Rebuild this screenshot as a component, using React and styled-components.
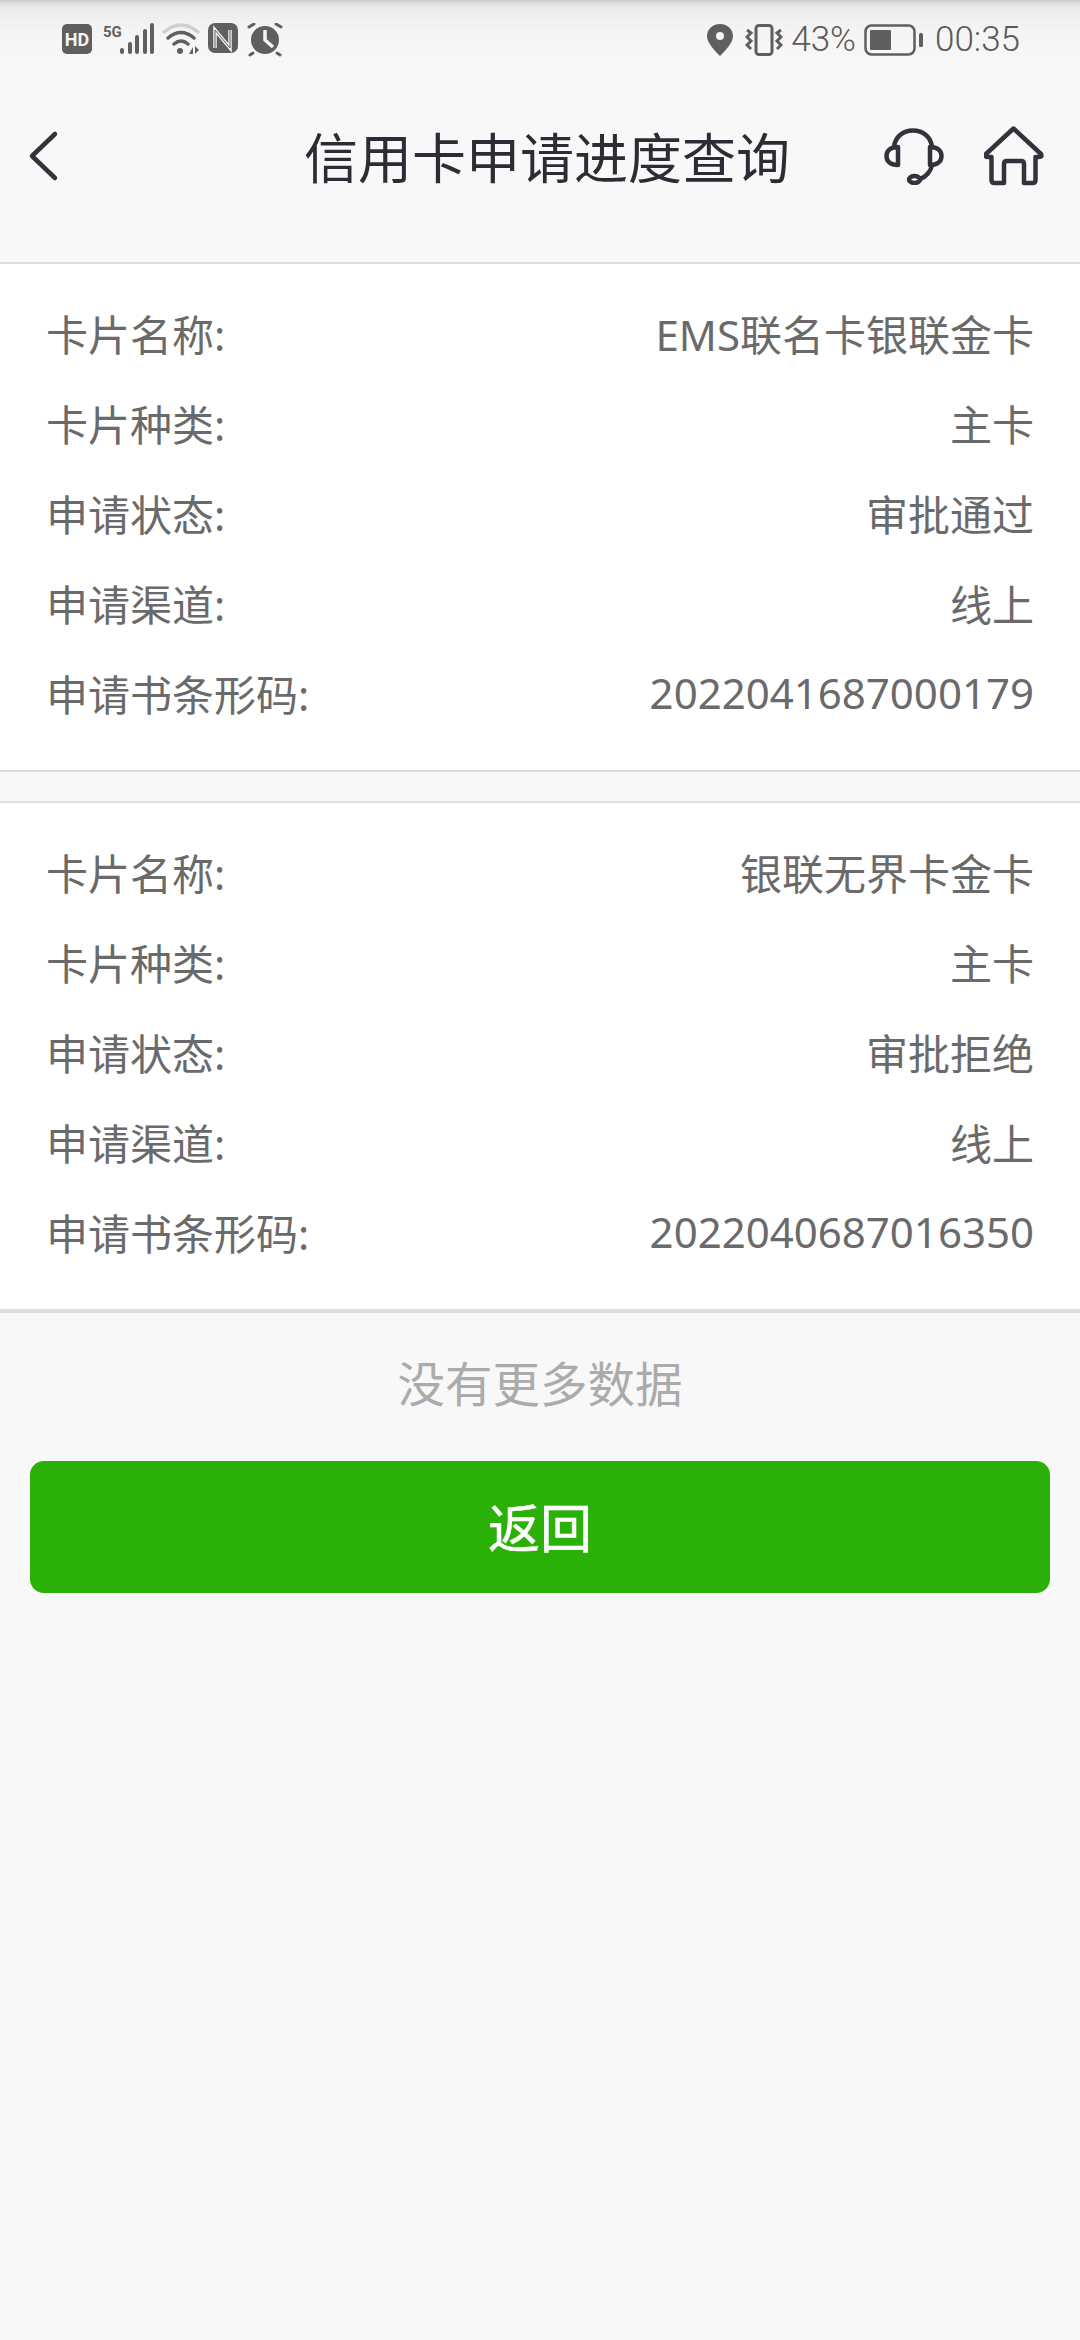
import React from 'react';
import styled, {createGlobalStyle} from 'styled-components';

const GlobalStyle = createGlobalStyle`
  html, body {
    margin: 0;
    padding: 0;
    background: #f8f8f8;
    font-family: "Noto Sans", "Noto Sans CJK SC", sans-serif;
  }
  * { box-sizing: border-box; }
`;

const Page = styled.div`
  width: 1080px;
  height: 2340px;
  overflow: hidden;
  background: #f8f8f8;
`;

const StatusBar = styled.div`
  height: 80px;
  padding: 0 60px 0 62px;
  display: flex;
  align-items: center;
  justify-content: space-between;
  color: #5a5a5a;
  background: linear-gradient(#c9c9c9 0, #dedede 3px, #ececec 8px, #f4f4f4 30px, #f8f8f8 62px);
`;

const StatusGroup = styled.div`
  display: flex;
  align-items: center;
  gap: ${props => props.$gap}px;
`;

const StatusText = styled.span`
  font-family: Roboto, sans-serif;
  font-size: 35px;
  font-weight: 300;
  line-height: 40px;
  margin-left: ${props => props.$left || 0}px;
`;

const NavBar = styled.div`
  height: 182px;
  padding: 0 36px 30px 28px;
  display: flex;
  align-items: center;
`;

const NavTitle = styled.h1`
  margin: 0 0 0 146px;
  flex: 1;
  text-align: center;
  font-family: "Noto Sans CJK SC", sans-serif;
  font-size: 54px;
  font-weight: 400;
  line-height: 70px;
  color: #2c2c34;
`;

const NavActions = styled.div`
  display: flex;
  align-items: center;
  gap: 40px;
`;

const Card = styled.section`
  background: #fff;
  border-top: 2px solid #dedede;
  border-bottom: ${props => props.$last ? 4 : 2}px solid #dedede;
  padding: 24px 46px 0 46px;
  height: ${props => props.$last ? 512 : 510}px;
  margin-bottom: ${props => props.$last ? 0 : 29}px;
`;

const Row = styled.div`
  height: 89.8px;
  display: flex;
  align-items: center;
  justify-content: space-between;
  font-size: 42px;
  font-weight: 400;
  color: #6a6a6a;
`;

const NoMore = styled.div`
  margin-top: 34px;
  text-align: center;
  font-family: "Noto Sans CJK SC", sans-serif;
  font-size: 47.5px;
  font-weight: 400;
  line-height: 70px;
  color: #ababab;
`;

const BackButton = styled.button`
  display: block;
  width: 1020px;
  height: 132px;
  margin: 44px 30px 0;
  padding: 0 0 3px;
  border: 0;
  border-radius: 14px;
  background: #2bb008;
  color: #fff;
  font-family: "Noto Sans CJK SC", sans-serif;
  font-size: 52px;
  font-weight: 400;
  -webkit-text-stroke: 0.5px #fff;
`;

const BackIcon = () => (
  <svg width="36" height="60" viewBox="0 0 36 60" fill="none" stroke="#33333b" strokeWidth="4.5" strokeLinecap="round" strokeLinejoin="round">
    <path d="M27 8 L4 30 L27 52"/>
  </svg>
);

const HeadsetIcon = () => (
  <svg width="60" height="57" viewBox="0 0 60 57" fill="none" stroke="#33333b" strokeWidth="4.5" strokeLinecap="round" strokeLinejoin="round">
    <path d="M10 19 C11 9 19 2.5 29 2.5 C39 2.5 47 9 48 19"/>
    <path d="M14 19 C6 19 2.5 23 2.5 28 C2.5 33 6 37 14 37 Z"/>
    <path d="M46 19 C54 19 57.5 23 57.5 28 C57.5 33 54 37 46 37 Z"/>
    <path d="M48 37 C47 43 42 49 36 51"/>
    <ellipse cx="30.5" cy="51.5" rx="5.5" ry="3.5"/>
  </svg>
);

const HomeIcon = () => (
  <svg width="60" height="60" viewBox="0 0 60 60" fill="none" stroke="#33333b" strokeWidth="4.5" strokeLinecap="round" strokeLinejoin="round">
    <path d="M29.5 2.5 L57 28 Q58.5 31 55 31 L51.5 31 L51.5 54 Q51.5 57 48.5 57 L40 57 L40 38 Q40 35 37 35 L23 35 Q20 35 20 38 L20 57 L10.5 57 Q7.5 57 7.5 54 L7.5 31 L4 31 Q0.5 31 2 28 Z"/>
  </svg>
);

const SignalIcons = () => (
  <svg width="222" height="34" viewBox="0 0 222 34" fill="#5f5f5f">
    <rect x="0" y="1" width="30" height="30" rx="5"/>
    <text x="15" y="22.5" fontSize="18" fontWeight="700" fill="#f5f5f5" textAnchor="middle" fontFamily="Roboto">HD</text>
    <text x="41" y="14" fontSize="15" fontWeight="700" fontFamily="Roboto">5G</text>
    <rect x="58" y="25" width="4" height="6" rx="2"/>
    <rect x="66" y="19" width="4" height="12" rx="2"/>
    <rect x="73" y="12" width="4" height="19" rx="2"/>
    <rect x="81" y="6" width="4" height="25" rx="2"/>
    <rect x="88" y="0" width="4" height="31" rx="2"/>
    <path d="M102 9 Q119 -5 136 9" fill="none" stroke="#cfcfcf" strokeWidth="3.5" strokeLinecap="round"/>
    <path d="M106 15 Q119 4 132 15" fill="none" stroke="#5f5f5f" strokeWidth="3.5" strokeLinecap="round"/>
    <path d="M112 21 Q119 15 126 21" fill="none" stroke="#5f5f5f" strokeWidth="3.5" strokeLinecap="round"/>
    <circle cx="118" cy="28" r="3"/>
    <path d="M127 31 L131 31 L131 24 Z M133 23 L133 31 L137 27 Z"/>
    <rect x="146" y="0" width="30" height="30" rx="7"/>
    <path d="M153 25 L153 7 L168 25 L168 7" fill="none" stroke="#f5f5f5" strokeWidth="3.5"/>
    <path d="M153 25 L153 7 L168 25 L168 7" fill="none" stroke="#5f5f5f" strokeWidth="1"/>
    <circle cx="203" cy="17" r="14"/>
    <path d="M203 7 L203 17 L211 24" fill="none" stroke="#f5f5f5" strokeWidth="3.5"/>
    <path d="M187 4 L192 1 M219 4 L214 1 M191 30 L188 32 M215 30 L218 32" stroke="#5f5f5f" strokeWidth="3" strokeLinecap="round"/>
  </svg>
);

const LocationIcon = () => (
  <svg width="26" height="32" viewBox="0 0 26 32" fill="#5f5f5f">
    <path fillRule="evenodd" d="M13 0 C21 0 26 6 26 12 C26 19 18 27 13 32 C8 27 0 19 0 12 C0 6 5 0 13 0 Z M13 8 A4 4 0 1 0 13.01 16 A4 4 0 1 0 13 8 Z"/>
  </svg>
);

const VibrateIcon = () => (
  <svg width="38" height="32" viewBox="0 0 38 32" fill="none" stroke="#5f5f5f" strokeWidth="3">
    <rect x="11" y="1.5" width="16" height="29" rx="3"/>
    <path d="M2 6 L6 9 L2 13 L6 17 L2 21 L6 25 M36 6 L32 9 L36 13 L32 17 L36 21 L32 25"/>
  </svg>
);

const BatteryIcon = () => (
  <svg width="60" height="32" viewBox="0 0 60 32" fill="none">
    <rect x="1.5" y="1.5" width="49" height="29" rx="6" stroke="#5f5f5f" strokeWidth="2.5"/>
    <rect x="6" y="6" width="21" height="20" rx="1" fill="#5f5f5f"/>
    <rect x="55" y="9" width="4" height="14" rx="1.5" fill="#5f5f5f"/>
  </svg>
);

const cards = [
  {name: 'EMS联名卡银联金卡', state: '审批通过', code: '2022041687000179'},
  {name: '银联无界卡金卡', state: '审批拒绝', code: '2022040687016350'},
];

const App = () => {
  return (
    <Page>
      <GlobalStyle/>
      <StatusBar>
        <SignalIcons/>
        <StatusGroup $gap={8}>
          <StatusGroup $gap={12}>
            <LocationIcon/>
            <VibrateIcon/>
          </StatusGroup>
          <StatusText>43%</StatusText>
          <BatteryIcon/>
          <StatusText $left={3}>00:35</StatusText>
        </StatusGroup>
      </StatusBar>
      <NavBar>
        <BackIcon/>
        <NavTitle>信用卡申请进度查询</NavTitle>
        <NavActions>
          <HeadsetIcon/>
          <HomeIcon/>
        </NavActions>
      </NavBar>
      {cards.map((card, i) => (
        <Card key={card.code} $last={i === cards.length - 1}>
          <Row><span>卡片名称:</span><span>{card.name}</span></Row>
          <Row><span>卡片种类:</span><span>主卡</span></Row>
          <Row><span>申请状态:</span><span>{card.state}</span></Row>
          <Row><span>申请渠道:</span><span>线上</span></Row>
          <Row><span>申请书条形码:</span><span>{card.code}</span></Row>
        </Card>
      ))}
      <NoMore>没有更多数据</NoMore>
      <BackButton>返回</BackButton>
    </Page>
  );
};

export default App;
